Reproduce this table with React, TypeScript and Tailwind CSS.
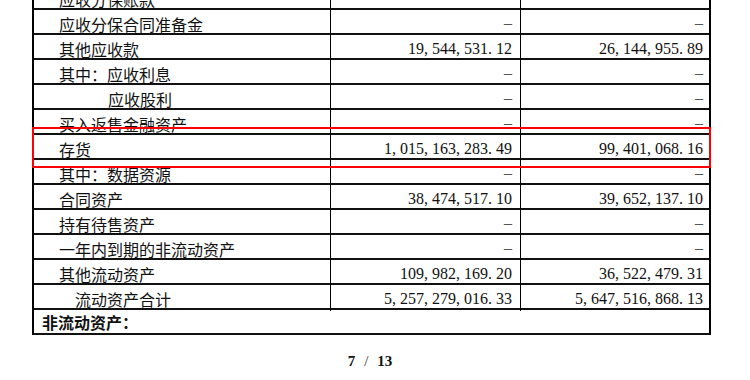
const rows: { label: string; indent: string; a: string; b: string }[] = [
  { label: "应收分保账款", indent: "pl-[25px]", a: "", b: "" },
  { label: "应收分保合同准备金", indent: "pl-[25px]", a: "–", b: "–" },
  { label: "其他应收款", indent: "pl-[25px]", a: "19, 544, 531. 12", b: "26, 144, 955. 89" },
  { label: "其中：应收利息", indent: "pl-[25px]", a: "–", b: "–" },
  { label: "应收股利", indent: "pl-[74px]", a: "–", b: "–" },
  { label: "买入返售金融资产", indent: "pl-[25px]", a: "–", b: "–" },
  { label: "存货", indent: "pl-[25px]", a: "1, 015, 163, 283. 49", b: "99, 401, 068. 16" },
  { label: "其中：数据资源", indent: "pl-[25px]", a: "–", b: "–" },
  { label: "合同资产", indent: "pl-[25px]", a: "38, 474, 517. 10", b: "39, 652, 137. 10" },
  { label: "持有待售资产", indent: "pl-[25px]", a: "–", b: "–" },
  { label: "一年内到期的非流动资产", indent: "pl-[25px]", a: "–", b: "–" },
  { label: "其他流动资产", indent: "pl-[25px]", a: "109, 982, 169. 20", b: "36, 522, 479. 31" },
  { label: "流动资产合计", indent: "pl-[41px]", a: "5, 257, 279, 016. 33", b: "5, 647, 516, 868. 13" },
];

function Num({ v }: { v: string }) {
  if (v === "–") {
    return <span className="text-[#555] text-[16px] -translate-y-[1px]">–</span>;
  }
  return <span>{v}</span>;
}

export default function App() {
  return (
    <div className="relative w-[750px] h-[380px] overflow-hidden bg-white text-[#111]">
      <div className="ml-[32px] -mt-[15px] w-[679px] border-l-2 border-r-2 border-black">
        {rows.map((r) => (
          <div key={r.label} className="grid grid-cols-[297px_190px_188px] h-[25px] border-b-2 border-[#111]">
            <div
              className={`flex items-center pt-[2px] text-[16px] border-r-[1.5px] border-black ${r.indent}`}
              style={{ fontFamily: '"Noto Sans CJK SC", sans-serif' }}
            >
              {r.label}
            </div>
            <div
              className="flex items-center justify-end pr-[8px] pt-[2px] text-[16px] border-r-[1.5px] border-black"
              style={{ fontFamily: '"Liberation Serif", serif' }}
            >
              <Num v={r.a} />
            </div>
            <div
              className="flex items-center justify-end pr-[6px] pt-[2px] text-[16px]"
              style={{ fontFamily: '"Liberation Serif", serif' }}
            >
              <Num v={r.b} />
            </div>
          </div>
        ))}
        <div
          className="h-[25px] flex items-center pl-[8px] pt-[1px] text-[16px] font-bold border-b-2 border-[#111]"
          style={{ fontFamily: '"Noto Sans CJK SC", sans-serif' }}
        >
          非流动资产：
        </div>
      </div>

      <div
        className="mt-[15px] flex justify-center text-[15px]"
        style={{ fontFamily: '"Liberation Serif", serif' }}
      >
        <span className="ml-[-10px] font-bold">7</span>
        <span className="mx-[9px] font-normal text-[#333]">/</span>
        <span className="font-bold">13</span>
      </div>

      <div className="absolute left-[32px] top-[127px] w-[679px] h-[41px] border-2 border-[#ff0000]" />
    </div>
  );
}
